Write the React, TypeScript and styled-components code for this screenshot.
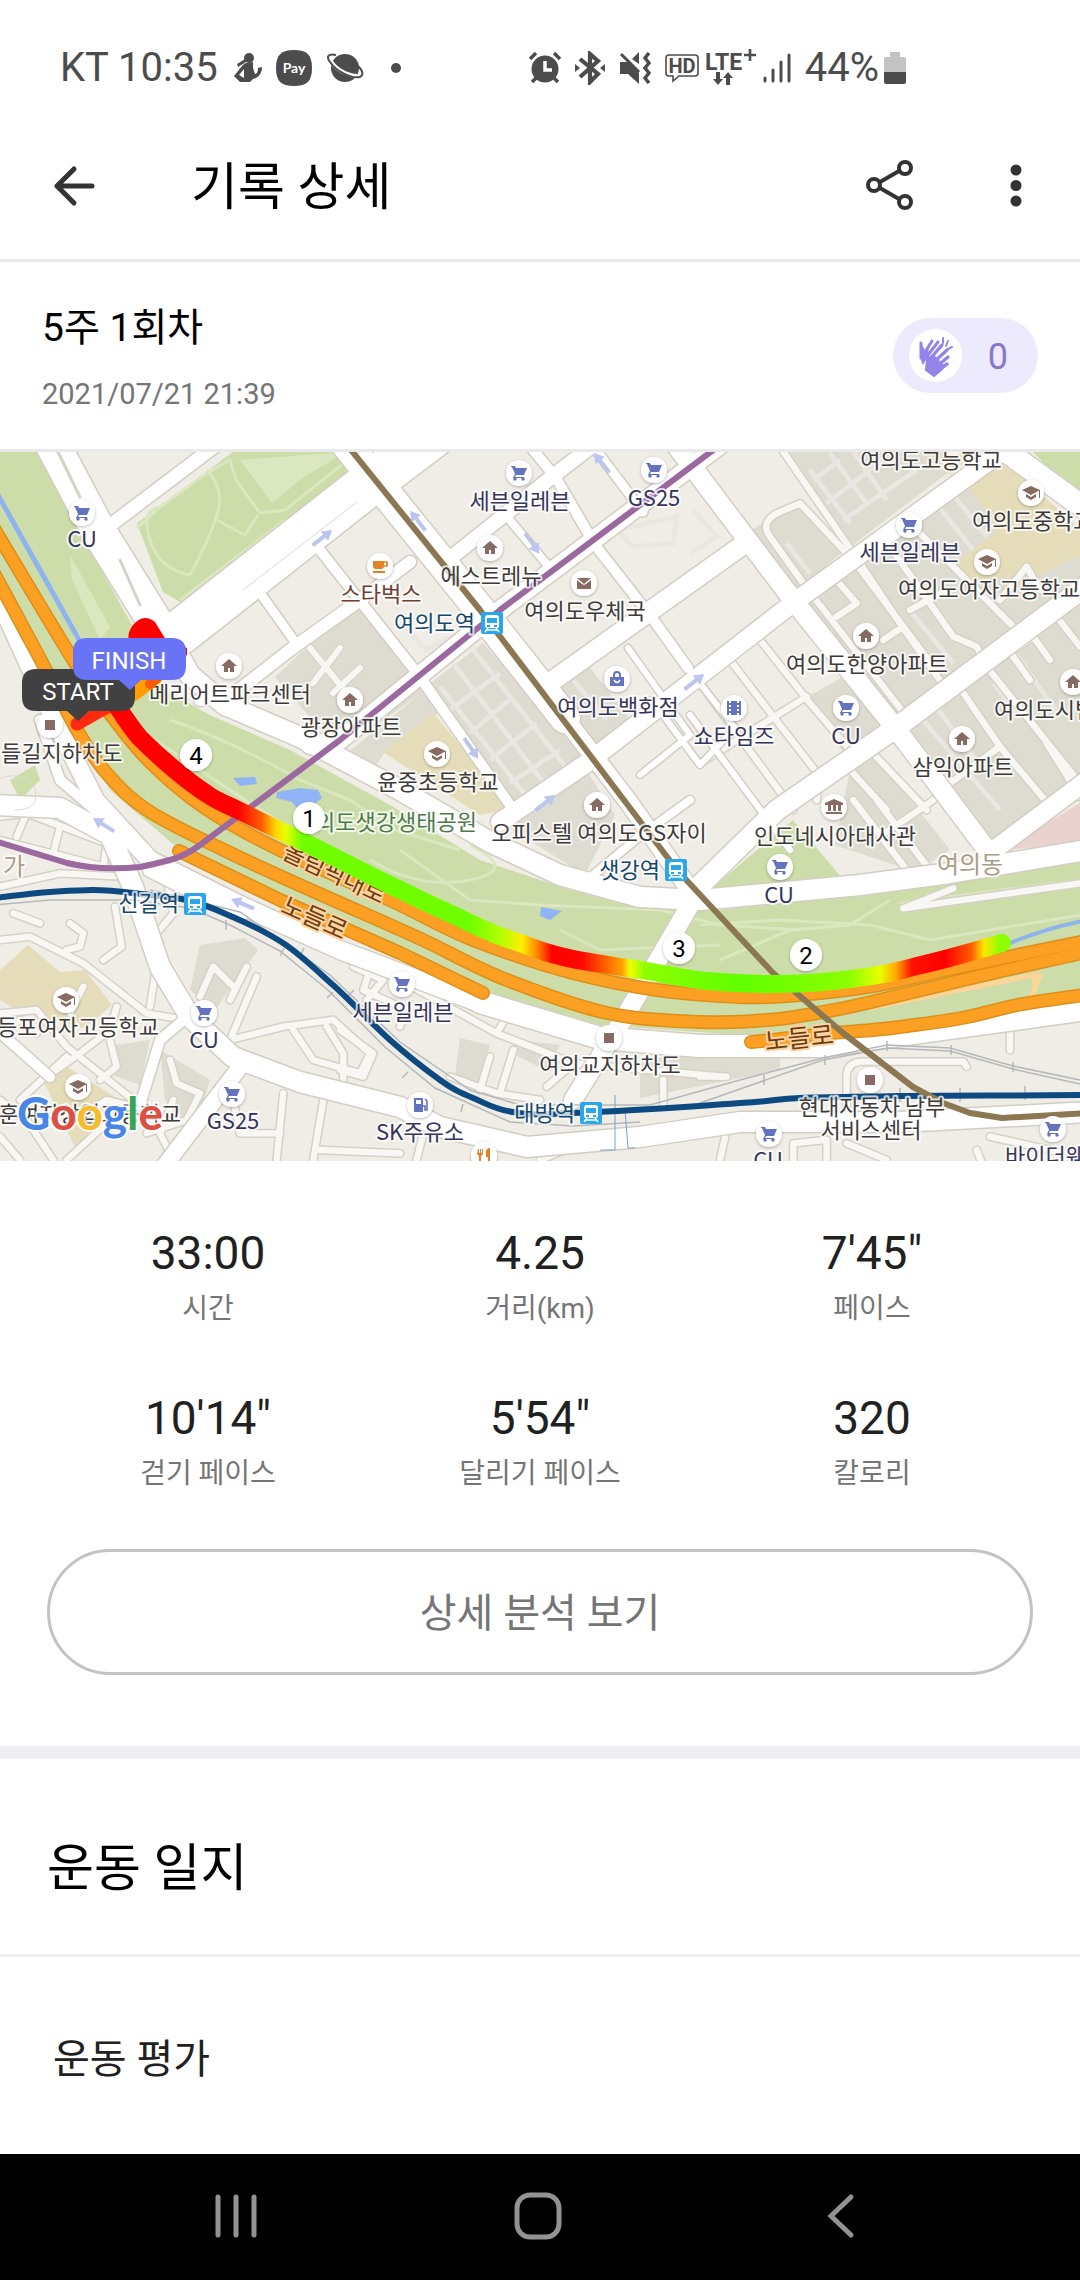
import React from 'react';
import styled, { createGlobalStyle } from 'styled-components';

const GlobalStyle = createGlobalStyle`
  * { box-sizing: border-box; }
  body {
    margin: 0;
    background: #fff;
    font-family: Roboto, 'Noto Sans CJK KR', sans-serif;
    color: #000;
  }
  h1, h2, h3, p, dl, dd, dt { margin: 0; font-weight: 400; }
  button { font: inherit; color: inherit; background: none; border: 0; padding: 0; cursor: pointer; }
`;

const Page = styled.div`
  display: flex;
  flex-direction: column;
  min-height: 100vh;
`;

/* ---------- status bar ---------- */

const StatusBar = styled.div`
  display: flex;
  align-items: center;
  justify-content: space-between;
  height: 112px;
  padding: 24px 174px 0 60px;
  color: #4c4c4c;
  font-size: 40px;
  line-height: 48px;
`;

const StatusGroup = styled.div<{ $gap: number }>`
  display: flex;
  align-items: center;
  gap: ${(p) => p.$gap}px;
  svg { display: block; flex: none; }
`;

const StatusText = styled.span`
  white-space: nowrap;
`;

const Battery = styled.span`
  display: flex;
  align-items: center;
  gap: 5px;
`;

const Ink = '#4c4c4c';

const PersonIcon = () => (
  <svg width="28" height="36" viewBox="0 0 28 36" fill={Ink}>
    <circle cx="15" cy="8" r="5" />
    <path d="M11 9L3 14l1 3 8-5z" />
    <path d="M12 13l7-1v6l2 6c2 0 3-3 3-6l4-1c0 7-4 11-9 12l-3 3H6l-6-6 8-10 2-2zM10 19l-5 6 5 3z" fillRule="evenodd" />
  </svg>
);

const PayIcon = () => (
  <svg width="36" height="36" viewBox="0 0 36 36">
    <path d="M18 0C31 0 36 5 36 18S31 36 18 36 0 31 0 18 5 0 18 0z" fill={Ink} />
    <text x="18" y="23" textAnchor="middle" fontSize="14" fontWeight="700" fill="#fff" fontFamily="Lato, sans-serif">Pay</text>
  </svg>
);

const PlanetIcon = () => (
  <svg width="38" height="36" viewBox="0 0 38 36">
    <circle cx="19" cy="18" r="14" fill={Ink} />
    <path d="M4 9C7 17 18 25 31 26" fill="none" stroke="#fff" strokeWidth="4" />
    <path d="M10 5C2 3 0 7 4 12c6 9 21 17 30 15 4-2 3-6-2-11" fill="none" stroke={Ink} strokeWidth="2" />
  </svg>
);

const DotIcon = () => (
  <svg width="50" height="12" viewBox="0 0 50 12"><circle cx="18" cy="6" r="5" fill={Ink} /></svg>
);

const AlarmIcon = () => (
  <svg width="32" height="32" viewBox="0 0 32 32">
    <circle cx="16" cy="17" r="13.5" fill={Ink} />
    <path d="M1 7l6-6M31 7l-6-6M7 26l-4 4M25 26l4 4" stroke={Ink} strokeWidth="3.5" fill="none" />
    <path d="M16 9v9h7" stroke="#fff" strokeWidth="3.5" fill="none" />
  </svg>
);

const BluetoothIcon = () => (
  <svg width="30" height="34" viewBox="0 0 30 34">
    <path d="M5 8l18 15-8 8V3l8 7L5 26" stroke={Ink} strokeWidth="4.2" fill="none" />
    <path d="M0 13l5 4-5 4zM30 13l-5 4 5 4z" fill={Ink} />
  </svg>
);

const MuteIcon = () => (
  <svg width="32" height="32" viewBox="0 0 32 32">
    <path d="M1 10h8l11 11v11L9 22H1zM13 7l7-7v12z" fill={Ink} />
    <path d="M2 2l18 18" stroke={Ink} strokeWidth="3" />
    <path d="M30 1l-4 5 4 5-4 5 4 5-4 5 4 5" stroke={Ink} strokeWidth="3.5" fill="none" />
  </svg>
);

const HdIcon = () => (
  <svg width="34" height="30" viewBox="0 0 34 30">
    <path d="M4 2h26q3 0 3 3v15q0 3-3 3H14l-6 5v-5H4q-3 0-3-3V5q0-3 3-3z" fill="none" stroke={Ink} strokeWidth="1.6" />
    <text x="17" y="20" textAnchor="middle" fontSize="20" fontWeight="700" fill={Ink}>HD</text>
  </svg>
);

const LteIcon = () => (
  <svg width="52" height="38" viewBox="0 0 52 38">
    <text x="0" y="21" fontSize="23" fontWeight="700" fill={Ink}>LTE</text>
    <path d="M45 0v12M39 6h12" stroke={Ink} strokeWidth="2.6" />
    <path d="M11 23h4v7h3l-5 6-5-6h3zM21 36h4v-7h3l-5-6-5 6h3z" fill={Ink} />
  </svg>
);

const SignalIcon = () => (
  <svg width="28" height="30" viewBox="0 0 28 30">
    <path d="M2 25v3M10 17v11M18 9v19M26 2v26" stroke={Ink} strokeWidth="3" strokeLinecap="round" />
  </svg>
);

const BatteryIcon = () => (
  <svg width="22" height="34" viewBox="0 0 22 34">
    <path d="M6 1h10v5h4q2 0 2 2v13H0V8q0-2 2-2h4z" fill="#c3c3c3" />
    <path d="M0 21h22v10q0 2-2 2H2q-2 0-2-2z" fill={Ink} />
  </svg>
);

/* ---------- app bar ---------- */

const AppBar = styled.header`
  display: flex;
  align-items: center;
  height: 150px;
  padding: 0 40px 0 50px;
  border-bottom: 3px solid #e9e9e9;
`;

const IconButton = styled.button`
  display: grid;
  place-items: center;
  height: 96px;
`;

const Title = styled.h1`
  flex: 1;
  padding: 4px 0 0 93px;
  font-size: 51px;
  line-height: 60px;
`;

const AppActions = styled.div`
  display: flex;
  gap: 72px;
`;

/* ---------- session ---------- */

const Session = styled.section`
  display: flex;
  align-items: center;
  justify-content: space-between;
  padding: 0 42px;
  height: 190px;
  border-bottom: 3px solid #e9e9e9;
`;

const SessionText = styled.div`
  display: grid;
  gap: 22px;
  padding-top: 6px;
`;

const SessionName = styled.h2`
  font-size: 39px;
  line-height: 48px;
`;

const SessionDate = styled.p`
  font-size: 29px;
  line-height: 40px;
  color: #757575;
`;

const ClapButton = styled.button`
  display: flex;
  align-items: center;
  gap: 26px;
  height: 75px;
  padding: 0 30px 0 16px;
  border-radius: 38px;
  background: #edeafd;
  color: #8678cc;
  font-size: 36px;
  line-height: 44px;
`;

const ClapCount = styled.span`
  padding-top: 3px;
`;

const ClapBadge = styled.span`
  display: grid;
  place-items: center;
  width: 53px;
  height: 53px;
  border-radius: 50%;
  background: #fff;
`;

/* ---------- map ---------- */

const MapFrame = styled.section`
  svg { display: block; width: 100%; height: auto; }
`;

const MapLabel = styled.text<{ $ink?: string; $halo?: string; $size?: number }>`
  font-family: 'Noto Sans CJK KR', sans-serif;
  font-size: ${(p) => p.$size ?? 22}px;
  fill: ${(p) => p.$ink ?? '#3d3b3a'};
  stroke: ${(p) => p.$halo ?? 'rgba(255,255,255,.75)'};
  stroke-width: 4px;
  stroke-linejoin: round;
  paint-order: stroke;
`;

const GoogleMark = styled.text`
  font-family: Lato, sans-serif;
  font-size: 46px;
  font-weight: 700;
  stroke: rgba(255, 255, 255, .8);
  stroke-width: 4px;
  stroke-linejoin: round;
  paint-order: stroke;
`;

const BubbleText = styled.text`
  font-family: Roboto, sans-serif;
  font-size: 24px;
  fill: #fff;
  text-anchor: middle;
`;

const KmText = styled.text`
  font-family: Roboto, sans-serif;
  font-size: 24px;
  fill: #000;
  text-anchor: middle;
`;

const SHOP = '#35355c';
const BROWN = '#3d3b3a';

type Kind = 'cart' | 'home' | 'school' | 'mail' | 'bag' | 'film' | 'cup' | 'gas' | 'bank' | 'square' | 'food';

const glyphs: Record<Kind, React.ReactNode> = {
  cart: <g fill="#6373c0"><path d="M-8-7h4l1 2H8L5 2h-8l-1 2H5v1H-6l2-4-3-7h-1z" /><circle cx="-4" cy="6" r="1.7" /><circle cx="4" cy="6" r="1.7" /></g>,
  home: <path fill="#876a62" d="M0-7l8 7H5v6H1V2h-2v4h-4V0h-3z" />,
  school: <g fill="#876a62"><path d="M0-7L9-3 0 2-9-3z" /><path d="M-5 1l5 3 5-3v3L0 7l-5-3zM8-3h1V5H8z" /></g>,
  mail: <path fill="#876a62" d="M-7-5H7L0 1zM-7-3l5 4 2 1 2-1 5-4V6H-7z" />,
  bag: <g><path fill="#6373c0" d="M-7-2H7V7H-7z" /><path d="M-3-2v-2q0-3 3-3t3 3v2" fill="none" stroke="#6373c0" strokeWidth="2" /><path d="M-3 1q3 5 6 0" fill="none" stroke="#fff" strokeWidth="1.5" /></g>,
  film: <path fill="#6373c0" d="M-7-7h2v2h2v-2h6v2h2v-2h2V7H5V5H3v2h-6V5h-2v2h-2zM-5-3v2h2v-2zm0 4v2h2V1zM3-3v2h2v-2zm0 4v2h2V1z" fillRule="evenodd" />,
  cup: <g><path fill="#e28225" d="M-7-5H4V0q0 3-3 3h-5q-3 0-3-3zM-7 5H5v2H-7z" /><path d="M4-4h3v4H4" fill="none" stroke="#e28225" strokeWidth="1.6" /></g>,
  gas: <g><path fill="#6373c0" d="M-6-7H3V7H-6zM-4-5v4h5v-4z" fillRule="evenodd" /><path d="M3 1h2v4h2v-9L5-6" fill="none" stroke="#6373c0" strokeWidth="1.6" /></g>,
  bank: <path fill="#876a62" d="M0-8l9 4v2H-9v-2zM-6-2h3v6h-3zM-1-2h3v6h-3zM4-2h3v6H4zM-8 5H8v2H-8z" />,
  square: <path fill="#876a62" d="M-5-5H5V5H-5z" />,
  food: <path fill="#e28225" d="M-6-6h1v4h1v-4h1v4h1v-4h1v5l-2 2v6h-2V1l-2-2zM2-4q1-3 4-3V7H4V2H2z" />,
};

const pois: [Kind, number, number][] = [
  ['cart', 82, 513], ['cart', 519, 473], ['cart', 654, 470], ['cart', 909, 525], ['cart', 846, 708],
  ['cart', 780, 867], ['cart', 402, 984], ['cart', 204, 1013], ['cart', 232, 1094], ['cart', 769, 1134],
  ['cart', 1053, 1129], ['cup', 380, 566], ['home', 490, 548], ['home', 229, 666], ['home', 350, 700],
  ['home', 866, 636], ['home', 962, 739], ['home', 1073, 682], ['home', 597, 805], ['mail', 584, 583],
  ['bag', 617, 679], ['film', 734, 708], ['school', 437, 754], ['school', 1031, 493], ['school', 987, 562],
  ['school', 66, 1000], ['school', 78, 1087], ['bank', 834, 807], ['gas', 420, 1105], ['square', 50, 725],
  ['square', 609, 1038], ['square', 870, 1080], ['food', 484, 1155],
];

type Label = [string, number, number, string?, ('start' | 'end')?, number?];
const labels: Label[] = [
  ['CU', 82, 547, SHOP], ['스타벅스', 381, 602, '#6e4034'], ['세븐일레븐', 520, 509, SHOP], ['GS25', 654, 506, SHOP],
  ['에스트레뉴', 491, 584], ['여의도우체국', 585, 619], ['여의도역', 475, 631, '#14476b', 'end'], ['여의도백화점', 618, 715, SHOP],
  ['쇼타임즈', 734, 744, SHOP], ['윤중초등학교', 438, 790], ['광장아파트', 351, 735], ['메리어트파크센터', 230, 702],
  ['들길지하차도', 1, 761, BROWN, 'start'], ['여의도고등학교', 931, 468], ['세븐일레븐', 910, 560, SHOP],
  ['여의도중학교', 972, 529, BROWN, 'start'], ['여의도여자고등학교', 898, 597, BROWN, 'start'], ['여의도한양아파트', 867, 672],
  ['CU', 846, 744, SHOP], ['여의도시범', 994, 718, BROWN, 'start'], ['삼익아파트', 963, 775],
  ['여의도샛강생태공원', 477, 830, '#4c7a49', 'end'], ['오피스텔 여의도GS자이', 599, 841], ['샛강역', 660, 878, '#14476b', 'end'],
  ['인도네시아대사관', 835, 844], ['CU', 779, 903, SHOP], ['여의동', 970, 873, '#ab9c85', undefined, 24],
  ['가', 3, 875, '#ab9c85', 'start', 24], ['신길역', 179, 911, '#14476b', 'end'], ['세븐일레븐', 403, 1020, SHOP],
  ['영등포여자고등학교', 159, 1035, BROWN, 'end'], ['CU', 204, 1048, SHOP], ['GS25', 233, 1129, SHOP],
  ['훈여자상업고등학교', 181, 1122, BROWN, 'end'], ['SK주유소', 420, 1140, SHOP], ['여의교지하차도', 610, 1073],
  ['대방역', 575, 1121, '#14476b', 'end'], ['현대자동차 남부', 872, 1115], ['서비스센터', 871, 1138],
  ['CU', 768, 1168, SHOP], ['바이더웨이', 1005, 1164, SHOP, 'start'],
];

const stations: [number, number][] = [[492, 623], [676, 870], [195, 904], [591, 1113]];

/* [path, width] of the white streets */
const streets: [string, number][] = [
  ['M45 430L98 530L160 630', 34],
  ['M160 622L190 675L225 705L300 737L400 790L490 842L560 875L640 897L700 900L860 885L950 873L1080 851', 20],
  ['M179 633L361 490L440 430', 44],
  ['M335 430L480 610L565 718', 30],
  ['M560 712L630 804L690 890', 18],
  ['M104 530L215 446', 13],
  ['M720 445L500 610L340 740L310 745', 18],
  ['M448 560L553 476L592 446', 14],
  ['M525 440L556 478L595 545L652 618L688 668', 10],
  ['M508 518L550 568', 8],
  ['M593 446L643 512', 9],
  ['M548 684L660 604L740 547', 19],
  ['M672 440L793 600L897 730L993 858', 19],
  ['M1010 446L793 603L587 763L500 822', 18],
  ['M1090 583L897 727L777 810L690 895', 20],
  ['M990 853L1090 778', 18],
  ['M985 436L1090 512', 22],
  ['M312 540L417 673L515 812', 10],
  ['M258 590L295 642', 9],
  ['M200 700L235 693L290 650L360 600L410 562', 12],
  ['M688 668L735 728L700 765L652 700', 6],
  ['M628 648L690 735L640 775', 6],
  ['M690 715L790 850', 6],
  ['M587 880L640 836L690 800', 8],
  ['M-5 590L45 700L95 800L150 860L240 905L340 950L480 1003', 18],
  ['M480 1002L600 1038L700 1046L820 1046L920 1032L1080 1010', 22],
  ['M-5 805L60 808L110 835L133 887L160 967L190 1017L233 1057L300 1082L400 1107L440 1127L527 1147L640 1137L740 1122L900 1122L1090 1112', 20],
  ['M130 840L60 780L40 720', 10],
  ['M150 870L240 915', 14],
  ['M187 1017L160 1040L140 1105', 10],
  ['M240 1067L165 1165', 16],
  ['M-5 1028L50 1077', 10],
  ['M693 900L627 1013L573 1100', 18],
];

/* lanes, drawn on quarter sheets at three times the map's scale: [x, y, paths] */
const lanes: [number, number, string[]][] = [
  [0, 800, [
    'M0 50L80 40L320 130L310 200L0 120', 'M80 40L50 110', 'M180 80L160 160', 'M0 260L180 220L370 230',
    'M0 420L90 410L250 490L440 640L560 660', 'M40 340L120 370', 'M345 320L365 440L310 480', 'M210 370L250 400L240 440L200 450',
    'M500 240L520 340L470 400', 'M480 430L450 620', 'M0 640L110 630L200 740L400 900', 'M330 720L350 800L300 840',
    'M140 830L240 760L330 690L350 620', 'M60 900L200 770', 'M240 950L320 900L400 920', 'M600 590L640 500L700 560',
    'M740 500L690 600', 'M770 530L690 720L850 680L1000 660L1110 760L1080 820L940 780L880 690', 'M980 680L1030 760V860',
    'M1060 500L1150 540L1100 600', 'M510 780L530 850L600 880L560 960L440 1000', 'M520 900L480 1000L520 1080', 'M850 880L830 1080',
    'M970 900L940 1080', 'M700 900L720 1000L840 1000', 'M960 1050L1200 1060', 'M0 900L80 960L160 1080', 'M200 1080L330 960', 'M0 1010L60 1080',
    'M0 700L60 660L110 700', 'M250 560L210 640',
  ]],
  [340, 800, [
    'M0 440L180 540L470 700L700 790L1150 830', 'M470 700L500 650', 'M100 480L70 570L200 630L180 680', 'M330 830L470 880L600 900',
    'M450 770L420 870', 'M520 750L480 880', 'M700 790L620 860', 'M970 840V910', 'M0 690L100 760L70 830L0 810', 'M250 1000L230 1080',
    'M600 1080L700 1040',
  ]],
  [700, 800, [
    'M440 920V830Q440 790 480 785H790L800 800', 'M0 830H80', 'M30 1000L80 990L60 1080', 'M280 1080V1030L380 1020V1080',
    'M440 1030L560 1080', 'M870 1010L1140 1070', 'M930 690V750', 'M760 265L610 325L1140 250', 'M830 1050L850 1100',
    'M460 0L620 210', 'M530 0L690 210', 'M540 110L700 0',
  ]],
  [700, 450, [
    'M250 5L460 310L600 520L740 720', 'M310 400L210 260Q180 220 230 190L300 160L440 310', 'M340 440L620 800', 'M410 500L470 460L400 380',
    'M460 330L700 650', 'M570 290L760 560L830 590L860 650L1060 900L1140 1000', 'M660 250L940 530', 'M180 570L330 760L450 900', 'M90 630L220 800L360 980L350 1050',
    'M0 700L280 1080', 'M0 940L320 740', 'M770 700L900 890L1060 1080', 'M450 960L560 1080', 'M510 900L680 1080', 'M630 480L740 420',
    'M550 570L610 530', 'M750 1000L900 890', 'M870 650L1000 560L1050 630', 'M940 620L990 690', 'M1040 880L1140 1040', 'M1070 500L1140 590',
    'M900 450L980 350L1020 420',
  ]],
];

const fineLines: [number, number, string][] = [
  [700, 450, 'M330 60L450 220M390 10L500 160M460 5L560 150M340 90L420 30M380 160L560 20M430 210L650 60M620 470L760 640M700 760L850 960M660 800L900 1080M880 700L960 800M940 600L1080 800M700 150L820 300M740 110L860 260M260 280L330 370'],
  [340, 450, 'M340 640L620 1010M400 600L700 980M300 710L560 1040M330 780L480 670M390 850L520 740M450 930L590 820M510 1000L660 900M830 240L1010 200L1000 280L880 290zM1060 180L1130 260L1050 310M200 540L260 600L330 560M700 690L800 810'],
];

const park = 'M0 452H36L133 627L165 690L210 715L290 750L390 805L480 860L570 890L650 908L720 910L860 895L960 882L1080 862V990L950 1015L850 1036L740 1035L600 1025L480 990L330 930L180 850L110 790L50 690L0 590z';

type Point = [number, number];

/* a soft curve through a chain of points */
const curve = (points: Point[]) =>
  points.slice(1).reduce((d, p, i) => {
    const a = points[Math.max(i - 1, 0)];
    const b = points[i];
    const c = points[Math.min(i + 2, points.length - 1)];
    const c1 = [b[0] + (p[0] - a[0]) / 6, b[1] + (p[1] - a[1]) / 6].map(Math.round);
    const c2 = [p[0] - (c[0] - b[0]) / 6, p[1] - (c[1] - b[1]) / 6].map(Math.round);
    return `${d}C${c1.join(' ')} ${c2.join(' ')} ${p.join(' ')}`;
  }, `M${points[0].join(' ')}`);

const highways = [
  curve([[-5, 530], [67, 650], [105, 707], [150, 762], [205, 808], [280, 850], [390, 900], [473, 940], [573, 973], [657, 990], [740, 997], [800, 995], [867, 987], [950, 969], [1090, 940]]),
  curve([[-5, 575], [37, 653], [77, 730], [110, 777], [147, 810], [220, 848], [340, 903], [423, 940], [507, 980], [607, 1013], [700, 1022], [767, 1020], [817, 1013], [867, 1003], [967, 979], [1090, 951]]),
  'M179 851L280 900L400 953L483 993',
  curve([[751, 1042], [833, 1033], [900, 1027], [967, 1017], [1017, 1005], [1090, 994]]),
];

const subwayPurple = 'M720 445L500 610L340 740L260 800L200 845Q185 856 170 860T140 867Q100 871 67 863L-5 841';
const subwayBrown = 'M347 445L480 610L630 808L677 870L773 973L843 1033L913 1087L943 1103L970 1113L1002 1118L1090 1113';
const subwayNavy = curve([[-5, 898], [50, 892], [93, 890], [133, 893], [187, 900], [233, 917], [283, 943], [333, 985], [390, 1040], [440, 1080], [473, 1098], [513, 1112], [573, 1113], [740, 1103], [800, 1098], [900, 1096], [1090, 1095]]);

const track = curve([[118, 708], [140, 738], [175, 770], [210, 796], [240, 811], [283, 832], [340, 860], [390, 885], [440, 909], [483, 929], [520, 943], [560, 956], [603, 964], [647, 971], [707, 981], [773, 984], [833, 981], [883, 974], [917, 966], [960, 955], [1002, 943]]);

const stops: [number, string][] = [
  [115, '#ff0000'], [238, '#ff0000'], [262, '#ff6000'], [276, '#ffd800'], [286, '#e8ff00'], [302, '#70ff00'], [470, '#70ff00'],
  [500, '#b0ff00'], [522, '#ffee00'], [538, '#ff8000'], [552, '#ff0000'], [582, '#ff0800'], [605, '#ff6000'], [622, '#ffa000'],
  [630, '#f0ff00'], [645, '#8cff00'], [740, '#60ff00'], [850, '#8cff00'], [880, '#e8ff00'], [896, '#ffa800'], [912, '#ff1000'],
  [945, '#ff0000'], [972, '#ff6000'], [984, '#ffe800'], [1000, '#8cff00'],
];

const arrows: [number, number, number][] = [
  [322, 538, -38], [418, 521, -128], [532, 543, 55], [602, 463, -128], [694, 682, -38], [471, 748, 55], [545, 803, -38], [104, 825, -148], [243, 904, -157],
];

const kmPins: [string, number, number][] = [['4', 196, 755], ['1', 309, 818], ['3', 679, 948], ['2', 806, 955]];

const RouteMap = () => (
  <svg viewBox="0 452 1080 709" role="img" aria-label="달리기 경로 지도">
    <defs>
      <linearGradient id="pace" gradientUnits="userSpaceOnUse" x1="0" y1="0" x2="1080" y2="0">
        {stops.map(([x, c]) => <stop key={x} offset={x / 1080} stopColor={c} />)}
      </linearGradient>
      <filter id="lift" x="-30%" y="-30%" width="160%" height="160%">
        <feDropShadow dx="0" dy="1" stdDeviation="1.5" floodOpacity=".3" />
      </filter>
    </defs>
    <rect y="452" width="1080" height="709" fill="#f0ede6" />

    <g fill="#dedbd0">
      <path d="M275 677L355 602L425 690L340 752z" />
      <path d="M345 755L425 690L440 712L385 752L370 775z" />
      <path d="M428 685L483 643L590 765L530 812L500 790z" />
      <path d="M555 690L588 665L632 722L595 752z" />
      <path d="M500 822L583 765L615 815L585 875z" />
      <path d="M752 530L795 502L842 552L797 592z" />
      <path d="M780 452H975L850 547z" />
      <path d="M803 603L975 482L1080 552V590L897 718z" />
      <path d="M907 730L1080 605V785L993 845z" />
      <path d="M807 697L843 677L883 725L843 752z" />
      <path d="M850 770L873 752L950 850L915 872L835 845z" />
      <path d="M200 945L245 938L258 950L215 1010L190 990z" />
      <path d="M115 1045L150 1040L140 1085L112 1075z" />
      <path d="M160 1050L210 1080L195 1130L165 1100z" />
      <path d="M520 1040L560 1045L545 1070L515 1055z" />
      <path d="M640 1060L780 1045V1070L640 1098z" />
      <path d="M460 1038L490 1045L480 1085L455 1075z" />
    </g>
    <g fill="#e5dcb9">
      <path d="M383 752L433 713L512 808L480 815z" />
      <path d="M925 452H975L950 475zM963 480L1000 455L1080 530V555L1040 575L965 580L958 560L1000 530z" />
      <path d="M0 970L28 945L60 972L85 970L112 1005L85 1028L20 1012L0 1000z" />
      <path d="M43 1080L67 1067L120 1100L75 1147z" />
    </g>
    <path d="M1003 850L1080 803V843z" fill="#ead2cf" />
    <g fill="#ccdda9">
      <path d={park} />
      <path d="M137 523L233 452H357L360 468L180 602L163 592z" />
      <path d="M712 888L793 820L842 878z" />
      <path d="M1033 452H1080V500z" />
      <path d="M10 780L35 765L40 780L20 800z" />
    </g>
    <path d="M240 460L345 452L300 480L272 503z" fill="#dbe7bf" />
    <path d="M70 555L110 627L100 640L72 580z" fill="#dbe7bf" />
    <g fill="none" stroke="#dbe7bf" strokeWidth="3">
      <path d="M207 470Q225 490 217 515T190 575Q160 570 150 540T160 507L207 473L230 460L236 480L260 513L285 510L345 462" />
      <path d="M137 528L160 507M217 520L245 535L258 515M180 600L285 520" />
      <path d="M170 720Q230 740 300 780L350 800L395 830L460 850M370 860Q420 890 470 880T470 845" />
      <path d="M400 850L470 900L540 905L660 910L720 925L800 930M560 930L600 950L720 945" />
      <path d="M700 925L780 920L870 925L930 940L1080 915M720 960L790 930L850 925L890 900M900 903L1080 880" />
      <path d="M0 500L90 655L140 730L260 810L500 950L660 975" />
    </g>
    <g fill="#90b4f5">
      <path d="M233 778L255 777L257 784L240 786zM277 792L300 788L318 790L322 798L312 806L322 815L300 812L292 802L276 798z" />
      <path d="M541 907L562 911L550 920L540 916z" />
    </g>
    <path d="M-2 495L82 645" stroke="#8fb3ef" strokeWidth="5" />
    <path d="M1008 944Q1040 930 1082 921" stroke="#8fb3ef" strokeWidth="4" fill="none" />

    {fineLines.map(([x, y, d]) => (
      <path key={d} d={d} transform={`translate(${x} ${y}) scale(.3333)`} fill="none" stroke="#e9e7e2" strokeWidth="14" />
    ))}
    <g fill="none" strokeLinecap="round" strokeLinejoin="round">
      {['#d5d1c6', '#f9f7f3'].map((c, i) => (
        <g key={c} stroke={c} strokeWidth={i ? 19 : 28}>
          {lanes.map(([x, y, paths]) => (
            <g key={`${x}-${y}`} transform={`translate(${x} ${y}) scale(.3333)`}>
              {paths.map((d) => <path key={d} d={d} />)}
            </g>
          ))}
          <path d="M310 648L350 697M313 683L340 648M333 693L360 668" strokeWidth={i ? 6 : 8} />
        </g>
      ))}
      {streets.map(([d, w]) => <path key={d} d={d} stroke="#d2cec3" strokeWidth={w + 3} />)}
      {streets.map(([d, w]) => <path key={d} d={d} stroke="#fff" strokeWidth={w} />)}
      <path d="M58 452L80 497M120 560L140 605" stroke="#d6d2c8" strokeWidth="3" />
      <path d="M243 590L357 502M0 778Q30 770 35 790T15 810" stroke="#dedad2" strokeWidth="1" />
    </g>

    <g fill="none" stroke="#b5b8ba" strokeWidth="1.5">
      <path d="M-5 905L50 900L133 900L190 908L230 925L280 951L328 990L385 1047L435 1088L510 1122L573 1126L640 1122" />
      <path d="M150 890L240 912L330 975L400 1042L470 1090L520 1105L650 1105L740 1080L823 1058L887 1045L950 1048L1013 1066L1080 1080" />
      <path d="M700 1103L823 1060L887 1048L950 1051L1013 1069L1080 1084" />
      <path d="M764 1075v10M825 1055v10M887 1041v10M951 1045v10M1013 1062v10M226 920v10M284 948l-4 8M333 992l-6 6M408 1072l-6 6M463 1104l-2 8M304 948l-4 8M354 990l-6 6M900 1088v14M960 1088v14M1025 1086v14" />
    </g>
    <path d="M615 1095V1150H600M625 1110L628 1148H635" fill="none" stroke="#7ba0d0" strokeWidth="1" />

    <g fill="none" strokeLinecap="round" strokeLinejoin="round">
      <path d="M870 1008L1035 975V990M1028 1005L1040 975" stroke="#fdd596" strokeWidth="5" />
      {highways.map((d) => <path key={d} d={d} stroke="#dd8f18" strokeWidth="14" />)}
      {highways.map((d) => <path key={d} d={d} stroke="#fca024" strokeWidth="11" />)}
      <path d={subwayPurple} stroke="#9b689f" strokeWidth="6" />
      <path d={subwayNavy} stroke="#0d4a82" strokeWidth="6" />
      <path d={subwayBrown} stroke="#8b7752" strokeWidth="6" />
    </g>

    {arrows.map(([x, y, r]) => (
      <path key={`${x}-${y}`} d="M-12-2H3V-6L13 0L3 6V2H-12z" fill="#bcc5ef" transform={`translate(${x} ${y}) rotate(${r})`} />
    ))}

    <g textAnchor="middle">
      <MapLabel $ink="#6b3d10" $halo="#ffd3a0" $size={24} transform="translate(331 881) rotate(25)">올림픽대로</MapLabel>
      <MapLabel $ink="#6b3d10" $halo="#ffd3a0" $size={25} transform="translate(311 926) rotate(24)">노들로</MapLabel>
      <MapLabel $ink="#6b3d10" $halo="#ffd3a0" $size={25} transform="translate(800 1047) rotate(-6)">노들로</MapLabel>
    </g>

    {pois.map(([kind, x, y]) => (
      <g key={`${kind}-${x}`} transform={`translate(${x} ${y})`}>
        <circle r="13" fill="#fff" filter="url(#lift)" />
        {glyphs[kind]}
      </g>
    ))}
    {labels.map(([text, x, y, ink, anchor, size]) => (
      <MapLabel key={`${text}-${x}`} x={x} y={y} $ink={ink} $size={size} textAnchor={anchor ?? 'middle'}>{text}</MapLabel>
    ))}
    {stations.map(([x, y]) => (
      <g key={x} transform={`translate(${x} ${y})`}>
        <rect x="-11" y="-11" width="22" height="22" rx="2" fill="#2aa6ea" />
        <path d="M-4-8h8q3 0 3 3v8q0 2-2 2h-10q-2 0-2-2v-8q0-3 3-3zM-5-5v5H5v-5zM-5 2v2h3v-2zM2 2v2h3v-2z" fill="#fff" fillRule="evenodd" />
        <path d="M-4 5l-3 4M4 5l3 4M-5 7H5" stroke="#fff" strokeWidth="1.5" />
      </g>
    ))}

    <g fill="none" strokeLinecap="round" strokeLinejoin="round">
      <path d="M77 724L98 712L120 700" stroke="#ff2a10" strokeWidth="13" />
      <path d="M134 694L155 678" stroke="#ffa000" strokeWidth="14" />
      <path d="M150 684L172 664" stroke="#ff5a00" strokeWidth="10" />
      <path d="M130 645Q125 632 136 622Q145 614 155 622L166 640L187 648V655L170 668L130 650z" fill="#ff0000" />
      <path d={track} stroke="url(#pace)" strokeWidth="18" />
    </g>

    {kmPins.map(([n, x, y]) => (
      <g key={n}>
        <circle cx={x} cy={y} r="16" fill="#fff" filter="url(#lift)" />
        <KmText x={x} y={y + 9}>{n}</KmText>
      </g>
    ))}

    <path d="M36 669H121Q135 669 135 683V697Q135 711 121 711H89L78 721L67 711H36Q22 711 22 697V683Q22 669 36 669z" fill="#414141" />
    <BubbleText x="78" y="700">START</BubbleText>
    <path d="M87 638H172Q186 638 186 652V666Q186 680 172 680H141L130 690L119 680H87Q73 680 73 666V652Q73 638 87 638z" fill="#6973f6" />
    <BubbleText x="129" y="669">FINISH</BubbleText>

    <GoogleMark x="17" y="1130">
      <tspan fill="#4a86e8">G</tspan><tspan fill="#dd4f43">o</tspan><tspan fill="#f5bd2c">o</tspan>
      <tspan fill="#4a86e8">g</tspan><tspan fill="#37a456">l</tspan><tspan fill="#dd4f43">e</tspan>
    </GoogleMark>
  </svg>
);

/* ---------- statistics ---------- */

const Stats = styled.dl`
  display: grid;
  grid-template-columns: repeat(3, 1fr);
  row-gap: 63px;
  padding: 64px 42px 0;
`;

const Stat = styled.div`
  display: flex;
  flex-direction: column-reverse;
  align-items: center;
  gap: 10px;
`;

const StatValue = styled.dd`
  font-size: 46px;
  line-height: 56px;
  color: #212121;
`;

const StatLabel = styled.dt`
  font-size: 28px;
  line-height: 36px;
  color: #757575;
`;

const DetailButton = styled.button`
  height: 126px;
  margin: 57px 47px 71px;
  padding-top: 3px;
  border: 3px solid #c3c3c3;
  border-radius: 63px;
  color: #757575;
  font-size: 40px;
  line-height: 48px;
`;

/* ---------- journal ---------- */

const Journal = styled.section`
  flex: 1;
  border-top: 13px solid #eeeff3;
`;

const JournalTitle = styled.h2`
  padding: 80px 47px 55px;
  border-bottom: 3px solid #eeeff3;
  font-size: 51px;
  line-height: 60px;
`;

const JournalRow = styled.h3`
  padding: 79px 53px 44px;
  font-size: 40px;
  line-height: 48px;
  color: #212121;
`;

const NavBar = styled.nav`
  display: grid;
  grid-template-columns: repeat(3, 1fr);
  padding: 0 88px 0 85px;
  background: #000;
`;

const NavButton = styled.button`
  display: grid;
  place-items: center;
  height: 126px;
  padding-bottom: 3px;
`;

const stats = [
  ['시간', '33:00'], ['거리(km)', '4.25'], ['페이스', '7\'45"'],
  ['걷기 페이스', '10\'14"'], ['달리기 페이스', '5\'54"'], ['칼로리', '320'],
];

export default function App() {
  return (
    <Page>
      <GlobalStyle />
      <StatusBar>
        <StatusGroup $gap={16}>
          <StatusText>KT 10:35</StatusText>
          <StatusGroup $gap={14}>
            <PersonIcon />
            <PayIcon />
            <PlanetIcon />
            <DotIcon />
          </StatusGroup>
        </StatusGroup>
        <StatusGroup $gap={14}>
          <AlarmIcon />
          <BluetoothIcon />
          <MuteIcon />
          <StatusGroup $gap={6}>
            <HdIcon />
            <LteIcon />
            <SignalIcon />
          </StatusGroup>
          <Battery>
            <StatusText>44%</StatusText>
            <BatteryIcon />
          </Battery>
        </StatusGroup>
      </StatusBar>

      <AppBar>
        <IconButton aria-label="뒤로">
          <svg width="48" height="48" viewBox="0 0 48 48" fill="none" stroke="#333" strokeWidth="5" strokeLinecap="round" strokeLinejoin="round">
            <path d="M42 24H7M24 7L7 24l17 17" />
          </svg>
        </IconButton>
        <Title>기록 상세</Title>
        <AppActions>
          <IconButton aria-label="공유">
            <svg width="52" height="52" viewBox="0 0 52 52" fill="none" stroke="#333" strokeWidth="4">
              <path d="M16 22L35 11M16 28L35 39" />
              <circle cx="10" cy="25" r="6" />
              <circle cx="41" cy="8" r="6" />
              <circle cx="41" cy="42" r="6" />
            </svg>
          </IconButton>
          <IconButton aria-label="더보기">
            <svg width="52" height="48" viewBox="0 0 52 48" fill="#333">
              <circle cx="28" cy="8" r="5.5" /><circle cx="28" cy="23.5" r="5.5" /><circle cx="28" cy="39" r="5.5" />
            </svg>
          </IconButton>
        </AppActions>
      </AppBar>

      <Session>
        <SessionText>
          <SessionName>5주 1회차</SessionName>
          <SessionDate>2021/07/21 21:39</SessionDate>
        </SessionText>
        <ClapButton aria-label="응원 0">
          <ClapBadge>
            <svg width="44" height="44" viewBox="0 0 44 44" fill="none" stroke="#9384ec" strokeLinecap="round">
              <path d="M15 21L25 8M12 18L19 7M8 24V9" strokeWidth="3" />
              <path d="M8 24V10L12 17L15 14V22L10 30z" fill="#9384ec" strokeWidth="1" />
              <path d="M17 25L29 11M20 29L34 16M23 33L35 23M25 36L34 30M15 28L14 19" strokeWidth="3.4" />
              <path d="M14 25L20 21L31 33L27 37L21 42L13 36z" fill="#9384ec" strokeWidth="2" />
              <path d="M30 4v5M35 7l-2 5M39 13l-4 2" strokeWidth="2" />
            </svg>
          </ClapBadge>
          <ClapCount>0</ClapCount>
        </ClapButton>
      </Session>

      <MapFrame><RouteMap /></MapFrame>

      <Stats>
        {stats.map(([label, value]) => (
          <Stat key={label}>
            <StatLabel>{label}</StatLabel>
            <StatValue>{value}</StatValue>
          </Stat>
        ))}
      </Stats>
      <DetailButton>상세 분석 보기</DetailButton>

      <Journal>
        <JournalTitle>운동 일지</JournalTitle>
        <JournalRow>운동 평가</JournalRow>
      </Journal>

      <NavBar>
        <NavButton aria-label="최근 앱">
          <svg width="44" height="46" viewBox="0 0 44 46" stroke="#929292" strokeWidth="5" strokeLinecap="round">
            <path d="M4 4v38M22 4v38M40 4v38" />
          </svg>
        </NavButton>
        <NavButton aria-label="홈">
          <svg width="48" height="48" viewBox="0 0 48 48" fill="none" stroke="#929292" strokeWidth="5">
            <rect x="3" y="3" width="42" height="42" rx="13" />
          </svg>
        </NavButton>
        <NavButton aria-label="뒤로 가기">
          <svg width="30" height="48" viewBox="0 0 30 48" fill="none" stroke="#929292" strokeWidth="5" strokeLinecap="round">
            <path d="M25 5L5 24l20 19" />
          </svg>
        </NavButton>
      </NavBar>
    </Page>
  );
}
